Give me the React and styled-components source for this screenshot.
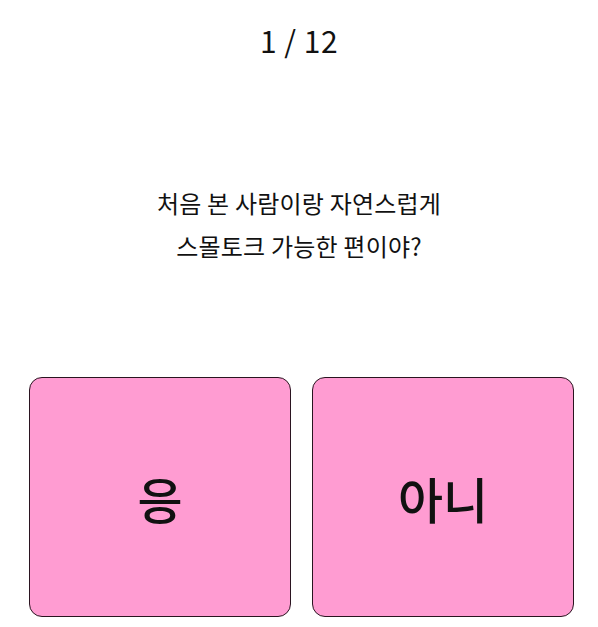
import React from "react";
import styled, { createGlobalStyle } from "styled-components";

const Global = createGlobalStyle`
  html, body {
    margin: 0;
    padding: 0;
    background: #ffffff;
  }
  body {
    font-family: "Noto Sans CJK KR", "Noto Sans", sans-serif;
    color: #111;
  }
`;

const Page = styled.main`
  width: 598px;
  height: 627px;
  display: flex;
  flex-direction: column;
  box-sizing: border-box;
`;

const Counter = styled.div`
  margin-top: 20px;
  height: 40px;
  line-height: 40px;
  font-size: 30px;
  font-weight: 400;
  text-align: center;
  letter-spacing: 0.5px;
`;

const Question = styled.p`
  margin: 121px 0 0;
  font-size: 24px;
  font-weight: 400;
  line-height: 43px;
  text-align: center;
  letter-spacing: 0.2px;
`;

const Choices = styled.div`
  margin-top: auto;
  padding: 0 24px 10px 29px;
  display: grid;
  grid-template-columns: 1fr 1fr;
  gap: 21px;
`;

const Choice = styled.button`
  height: 240px;
  background: #ff9cd2;
  border: 1px solid #2a1420;
  border-radius: 13px;
  font-family: inherit;
  font-size: 49px;
  font-weight: 500;
  color: #111;
  display: flex;
  align-items: center;
  justify-content: center;
  padding: 0;
  cursor: pointer;
`;

export default function App() {
  return (
    <>
      <Global />
      <Page>
        <Counter>1 / 12</Counter>
        <Question>
          처음 본 사람이랑 자연스럽게
          <br />
          스몰토크 가능한 편이야?
        </Question>
        <Choices>
          <Choice>응</Choice>
          <Choice>아니</Choice>
        </Choices>
      </Page>
    </>
  );
}
